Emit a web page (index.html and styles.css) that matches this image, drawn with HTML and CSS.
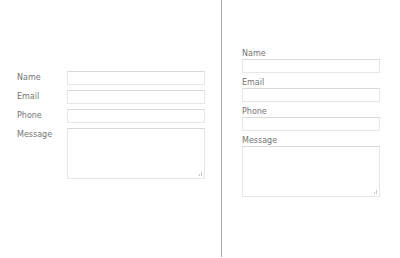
FILE: index.html
```html
<!DOCTYPE html>
<html>
<head>
<meta charset="utf-8">
<link rel="stylesheet" href="styles.css">
</head>
<body>
<div class="page">
  <section class="panel panel-left">
    <form class="form-h">
      <div class="row"><label class="lbl">Name</label><input class="field" type="text"></div>
      <div class="row"><label class="lbl">Email</label><input class="field" type="text"></div>
      <div class="row"><label class="lbl">Phone</label><input class="field" type="text"></div>
      <div class="row"><label class="lbl">Message</label><textarea class="field area"></textarea></div>
    </form>
  </section>
  <section class="panel panel-right">
    <form class="form-v">
      <div class="group"><label class="lbl">Name</label><input class="field" type="text"></div>
      <div class="group"><label class="lbl">Email</label><input class="field" type="text"></div>
      <div class="group"><label class="lbl">Phone</label><input class="field" type="text"></div>
      <div class="group"><label class="lbl">Message</label><textarea class="field area"></textarea></div>
    </form>
  </section>
</div>
</body>
</html>
```
FILE: styles.css
```css
html, body {
  margin: 0;
  padding: 0;
  background: #fff;
}
body {
  font-family: "DejaVu Sans", Verdana, sans-serif;
  font-size: 8px;
  color: #747474;
}
.page {
  display: flex;
  width: 400px;
  height: 258px;
}
.panel {
  box-sizing: border-box;
  height: 257px;
}
.panel-left {
  width: 222px;
  border-right: 1px solid #aaaaaa;
  padding: 71px 0 0 17px;
}
.panel-right {
  flex: 1;
  padding: 49px 0 0 20px;
}
.lbl {
  display: block;
  line-height: 10px;
}
.field {
  box-sizing: border-box;
  display: block;
  width: 138px;
  height: 14px;
  margin: 0;
  padding: 0 2px;
  border: 1px solid #e6e6e6;
  border-top-color: #d8d8d8;
  background: #fff;
  font: inherit;
  outline: none;
}
.field.area {
  height: 51px;
}
.field.area::-webkit-resizer {
  background:
    linear-gradient(#c8c8c8, #c8c8c8) right 2px bottom 2px / 1px 4px no-repeat,
    linear-gradient(#c8c8c8, #c8c8c8) right 4px bottom 2px / 1px 2px no-repeat;
}
.form-h .row {
  display: flex;
  align-items: flex-start;
  margin-bottom: 5px;
}
.form-h .lbl {
  width: 50px;
  padding-top: 2px;
}
.form-v .group {
  margin-bottom: 5px;
}
```
